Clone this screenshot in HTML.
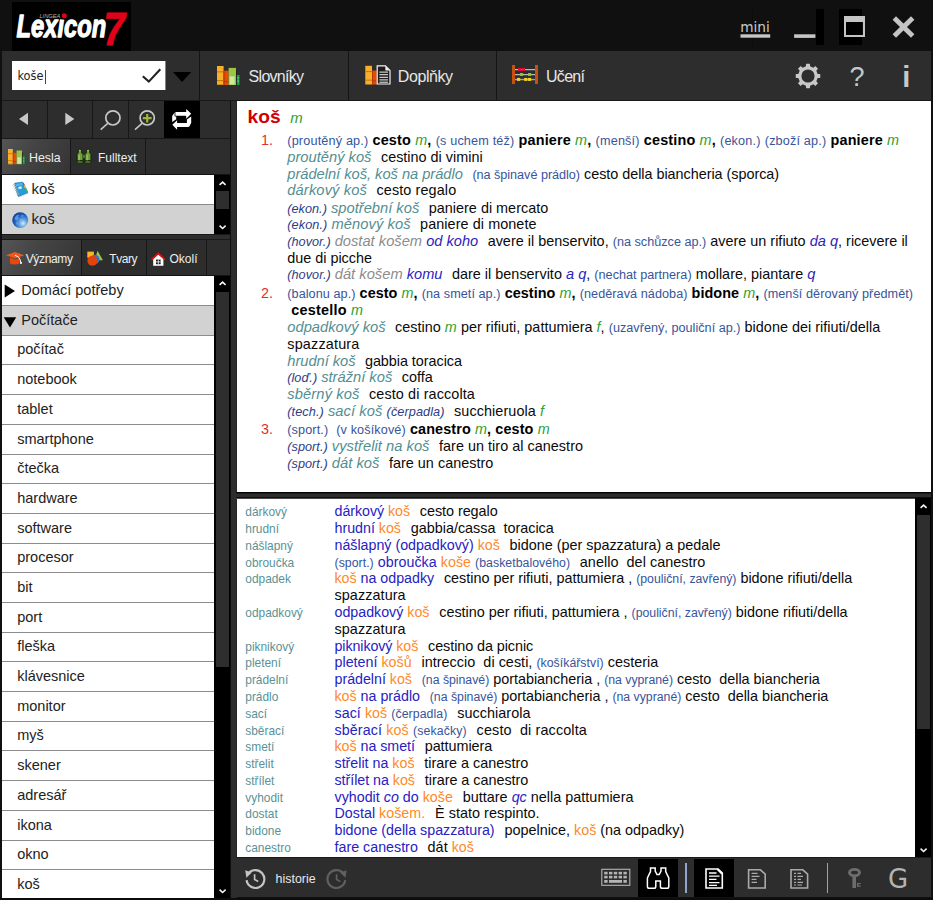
<!DOCTYPE html>
<html lang="cs"><head><meta charset="utf-8"><title>Lexicon 7</title>
<style>
*{box-sizing:border-box;margin:0;padding:0}
html,body{width:933px;height:900px;overflow:hidden}
body{background:#101010;position:relative;font-family:"Liberation Sans",sans-serif;font-size:14px;color:#000}
.a{position:absolute}
.pn{background:#2d2d2d}
svg{position:absolute;overflow:visible}
.mt{position:absolute;color:#e6e6e6;font-size:16px;line-height:20px;white-space:nowrap}
.tab{position:absolute;color:#eee;font-size:12px;line-height:16px;white-space:nowrap}
.li{position:absolute;left:2px;width:212px;white-space:nowrap;font-size:14.5px;color:#222}
.ln{position:absolute;white-space:nowrap;font-size:14.4px;line-height:17px;height:17px;color:#0a0a0a}
.b{font-weight:bold;color:#000}
.g{font-style:italic;color:#2f9f2f}
.p{font-size:12.65px;color:#37549c}
.pi{font-size:12.7px;font-style:italic;color:#303c86}
.t{font-style:italic;color:#538e92;font-size:14.7px}
.gr{font-style:italic;color:#8c8c8c;font-size:14.7px}
.bi{font-style:italic;color:#2d22c0;font-size:14.6px}
.n{color:#e0302c}
.k{font-size:11.9px;color:#5a9296}
.bl{color:#2722c2;font-size:14.25px}
.o{color:#ff8a2a;font-size:14.25px}
.sp{display:inline-block}
</style></head>
<body>
<div class="a" style="left:12px;top:2px;width:119px;height:49px;background:#000;"></div>
<svg style="left:12px;top:2px" width="119" height="49" viewBox="12 2 119 49">
<text x="16.6" y="36.6" font-family="Liberation Sans, sans-serif" font-weight="bold" font-style="italic" font-size="32" fill="#fff" stroke="#fff" stroke-width="1.3" stroke-linejoin="round" textLength="89.5" lengthAdjust="spacingAndGlyphs">Lexicon</text>
<text x="103.6" y="44.8" font-family="Liberation Sans, sans-serif" font-weight="bold" font-style="italic" font-size="47" fill="#e2001a" stroke="#e2001a" stroke-width="0.8" textLength="21.5" lengthAdjust="spacingAndGlyphs">7</text>
<ellipse cx="63.2" cy="16" rx="4.6" ry="3.4" fill="#000"/>
<circle cx="64.3" cy="15.8" r="2.5" fill="#e2001a"/>
<text x="39.4" y="17.8" font-family="Liberation Sans, sans-serif" font-style="italic" font-size="5.4" fill="#b0b0b0" textLength="21" lengthAdjust="spacingAndGlyphs">LINGEA</text>
</svg>
<div class="a" style="left:752px;top:9px;width:1px;height:36px;background:#0c0c0c;"></div>
<div class="a" style="left:816px;top:9px;width:8px;height:36px;background:#000;"></div>
<div class="a" style="left:839px;top:9px;width:23px;height:36px;background:#000;"></div>
<div class="a" style="left:740.2px;top:16.6px;font-family:'DejaVu Sans','Liberation Sans',sans-serif;font-size:13.7px;line-height:20px;color:#cacaca;white-space:nowrap">mini</div>
<svg style="left:738px;top:32px" width="80" height="8" viewBox="738 32 80 8"><rect x="740.5" y="34.3" width="29.7" height="3.4" fill="#c6c6c6"/><rect x="794.1" y="34.3" width="21.3" height="3.6" fill="#c6c6c6"/></svg>
<div class="a" style="left:844px;top:16px;width:21px;height:21px;border:2.5px solid #c4c4c4;border-top-width:6px"></div>
<svg style="left:892px;top:16px" width="23" height="22" viewBox="0 0 23 22"><path d="M2.3 2L20.7 20M20.7 2L2.3 20" stroke="#c4c4c4" stroke-width="4.9" fill="none"/></svg>
<div class="a" style="left:2px;top:51px;width:929px;height:49px;background:#2d2d2d;"></div>
<div class="a" style="left:2px;top:100px;width:929px;height:1px;background:#181818;"></div>
<div class="a" style="left:199px;top:51px;width:1px;height:49px;background:#161616;"></div>
<div class="a" style="left:348px;top:51px;width:1px;height:49px;background:#161616;"></div>
<div class="a" style="left:496px;top:51px;width:1px;height:49px;background:#161616;"></div>
<div class="a" style="left:12px;top:61px;width:153px;height:29px;background:#fff;"></div>
<div class="a" style="left:165px;top:61px;width:1px;height:29px;background:#858585;"></div>
<div class="a" style="left:17.4px;top:67.6px;font-family:'DejaVu Sans','Liberation Sans',sans-serif;font-size:11.4px;line-height:16px;color:#222;white-space:nowrap">koše</div>
<div class="a" style="left:44.5px;top:69.5px;width:1px;height:14px;background:#444;"></div>
<svg style="left:141px;top:67px" width="22" height="18" viewBox="141 67 22 18"><path d="M142.8 76.2L148.8 81.6L160.3 69.3" stroke="#222" stroke-width="2.1" fill="none"/></svg>
<svg style="left:172.9px;top:71.9px" width="19" height="11" viewBox="0 0 19 11"><path d="M0 0H18.2L9.1 10.1Z" fill="#000"/></svg>
<div class="mt" style="left:248.6px;top:67.3px;letter-spacing:-0.72px">Slovníky</div>
<div class="mt" style="left:397.8px;top:67.3px;letter-spacing:-0.42px">Doplňky</div>
<div class="mt" style="left:546px;top:67.3px;letter-spacing:-0.7px">Učení</div>
<svg style="left:217px;top:66px" width="23" height="19" viewBox="0 0 23 19">
<rect x="0" y="0" width="6.6" height="19" fill="#f9ae2c"/><rect x="0" y="5.3" width="6.6" height="1.1" fill="#c97a10"/><rect x="0" y="14" width="6.6" height="1.1" fill="#c97a10"/><rect x="0" y="18" width="6.6" height="1" fill="#d88a14"/>
<rect x="6.6" y="4.7" width="5" height="14.3" fill="#e24e08"/><rect x="6.6" y="15" width="5" height="1.1" fill="#b83800"/><rect x="6.6" y="4.7" width="1" height="14.3" fill="#b83800"/>
<rect x="11.6" y="1.9" width="7.4" height="17.1" fill="#9ac644"/><rect x="12.6" y="10.4" width="5" height="8" fill="#cfe8a0"/><rect x="19" y="4" width="0.9" height="15" fill="#1c1c1c"/>
<rect x="19.9" y="9" width="2.6" height="10" fill="#18a048"/><rect x="20.5" y="11.4" width="1.4" height="1" fill="#8fe0a5"/><rect x="20.5" y="14.6" width="1.4" height="1" fill="#8fe0a5"/>
</svg>
<svg style="left:365px;top:64.5px" width="26" height="20" viewBox="0 0 26 20">
<rect x="0.3" y="0.8" width="6.7" height="18.7" fill="#f9ae2c"/><rect x="0.3" y="6" width="6.7" height="1.1" fill="#c97a10"/><rect x="0.3" y="14.6" width="6.7" height="1.1" fill="#c97a10"/>
<rect x="7" y="5.6" width="4.8" height="13.9" fill="#e24e08"/><rect x="7" y="15.4" width="4.8" height="1.1" fill="#b83800"/><rect x="7" y="5.6" width="1" height="13.9" fill="#b83800"/>
<path d="M12.2 0.9H20.4L25 5.4V19H12.2Z" fill="#1e1e1e" stroke="#f2f2f2" stroke-width="1.2"/>
<path d="M20.4 0.9L25 5.4H20.4Z" fill="#f2f2f2"/>
<path d="M14.4 7.1H23M14.4 9.7H23M14.4 12.3H23M14.4 14.9H23M14.4 17.2H23" stroke="#f2f2f2" stroke-width="1"/>
</svg>
<svg style="left:511.5px;top:65px" width="26" height="19" viewBox="0 0 26 19">
<rect x="0" y="0" width="3" height="19" fill="#c8500e"/><rect x="23" y="0" width="3" height="19" fill="#c8500e"/>
<path d="M3 4.5H23M3 9.5H23M3 14.4H23" stroke="#d8d8d8" stroke-width="0.9"/><path d="M3 5.4H23M3 10.4H23M3 15.3H23" stroke="#555" stroke-width="0.9"/>
<rect x="6" y="3" width="3.2" height="3" fill="#e01030"/><rect x="9.8" y="3" width="3.2" height="3" fill="#e01030"/>
<rect x="8" y="8" width="3.2" height="3" fill="#8fbf3f"/><rect x="16" y="8" width="3.2" height="3" fill="#8fbf3f"/>
<rect x="5" y="12.9" width="3.2" height="3" fill="#f5d21a"/><rect x="12.2" y="12.9" width="3.2" height="3" fill="#f5d21a"/><rect x="16" y="12.9" width="3.2" height="3" fill="#f5d21a"/>
</svg>
<svg style="left:794.8px;top:63px" width="26" height="26" viewBox="-13 -13 26 26">
<path d="M-2.08 -9.68 L-1.94 -12.25 L1.94 -12.25 L2.08 -9.68 L5.37 -8.32 L7.29 -10.03 L10.03 -7.29 L8.32 -5.37 L9.68 -2.08 L12.25 -1.94 L12.25 1.94 L9.68 2.08 L8.32 5.37 L10.03 7.29 L7.29 10.03 L5.37 8.32 L2.08 9.68 L1.94 12.25 L-1.94 12.25 L-2.08 9.68 L-5.37 8.32 L-7.29 10.03 L-10.03 7.29 L-8.32 5.37 L-9.68 2.08 L-12.25 1.94 L-12.25 -1.94 L-9.68 -2.08 L-8.32 -5.37 L-10.03 -7.29 L-7.29 -10.03 L-5.37 -8.32Z M6.6 0A6.6 6.6 0 1 0 -6.6 0A6.6 6.6 0 1 0 6.6 0Z" fill="#c8c8c8" fill-rule="evenodd"/>
</svg>
<div class="a" style="left:849.5px;top:62px;font-size:27px;line-height:30px;color:#c8c8c8">?</div>
<div class="a" style="left:902.2px;top:62px;font-size:29px;line-height:30px;color:#c8c8c8;font-weight:bold">i</div>
<div class="a" style="left:2px;top:101px;width:229px;height:37px;background:#2d2d2d;"></div>
<div class="a" style="left:46.5px;top:101px;width:1.3px;height:37px;background:#171717;"></div>
<div class="a" style="left:92px;top:101px;width:1.3px;height:37px;background:#171717;"></div>
<div class="a" style="left:128px;top:101px;width:1.3px;height:37px;background:#171717;"></div>
<div class="a" style="left:164px;top:101px;width:36px;height:37px;background:#000;"></div>
<div class="a" style="left:2px;top:138px;width:229px;height:1px;background:#181818;"></div>
<svg style="left:2px;top:101px" width="198" height="37" viewBox="2 101 198 37"><path d="M28 112.8V125L19 118.9Z" fill="#c8c8c8"/><path d="M65.3 112.8V125L74.3 118.9Z" fill="#c8c8c8"/><circle cx="112.9" cy="117.9" r="7.1" fill="none" stroke="#c8c8c8" stroke-width="1.7"/><path d="M107.7 123.4L100.7 129.6" stroke="#c8c8c8" stroke-width="1.5"/><circle cx="147.2" cy="117.9" r="7.1" fill="none" stroke="#c8c8c8" stroke-width="1.7"/><path d="M142 123.4L135 129.6" stroke="#c8c8c8" stroke-width="1.5"/><path d="M142.8 118.2H151.6M147.2 113.9V122.6" stroke="#9ab53a" stroke-width="2.2"/><path d="M175.4 112H186.2V109.1L191.2 113.8L186.2 118.7V115.8H175.4Z" fill="#fff"/><path d="M174.6 112.4L172.2 116V122L176.2 119.2V116.6H174.6Z" fill="#fff"/><path d="M188.7 126.9H177.1V129.7L172.3 124.7L177.1 120.3V123.1H188.7Z" fill="#fff"/><path d="M191.2 116.4V122.7L189.4 126.4H186.9V119.6Z" fill="#fff"/></svg>
<div class="a" style="left:2px;top:139px;width:229px;height:36px;background:#2d2d2d;"></div>
<div class="a" style="left:2px;top:139px;width:68.5px;height:36px;background:;background:linear-gradient(120deg,#555,#444 40%,#383838 85%,#333)"></div>
<div class="a" style="left:70.3px;top:139px;width:1.2px;height:36px;background:#171717;"></div>
<div class="a" style="left:145.3px;top:139px;width:1.2px;height:36px;background:#171717;"></div>
<div class="a" style="left:2px;top:174px;width:229px;height:1px;background:#131313;"></div>
<svg style="left:8px;top:149.3px" width="17" height="15.2" preserveAspectRatio="none" viewBox="0 0 23 19">
<rect x="0" y="0" width="6.6" height="19" fill="#f9ae2c"/><rect x="0" y="5.3" width="6.6" height="1.1" fill="#c97a10"/><rect x="0" y="14" width="6.6" height="1.1" fill="#c97a10"/><rect x="0" y="18" width="6.6" height="1" fill="#d88a14"/>
<rect x="6.6" y="4.7" width="5" height="14.3" fill="#e24e08"/><rect x="6.6" y="15" width="5" height="1.1" fill="#b83800"/><rect x="6.6" y="4.7" width="1" height="14.3" fill="#b83800"/>
<rect x="11.6" y="1.9" width="7.4" height="17.1" fill="#9ac644"/><rect x="12.6" y="10.4" width="5" height="8" fill="#cfe8a0"/><rect x="19" y="4" width="0.9" height="15" fill="#1c1c1c"/>
<rect x="19.9" y="9" width="2.6" height="10" fill="#18a048"/><rect x="20.5" y="11.4" width="1.4" height="1" fill="#8fe0a5"/><rect x="20.5" y="14.6" width="1.4" height="1" fill="#8fe0a5"/>
</svg>
<div class="tab" style="left:29px;top:149.6px;font-size:12.4px">Hesla</div>
<svg style="left:76px;top:148px" width="16" height="16" viewBox="76 148 16 16">
<g stroke="#14200a" stroke-width="0.9" stroke-linejoin="round">
<rect x="82.2" y="154.2" width="3.6" height="4.6" fill="#7fb24a"/>
<path d="M78.5 152.2Q78 150.6 78.6 149.6Q79.9 148.8 81.2 149.6Q81.8 150.6 81.3 152.2L83 154.6V160.8H77.1V154.6Z" fill="#6f9f3c"/>
<path d="M86.7 152.2Q86.2 150.6 86.8 149.6Q88.1 148.8 89.4 149.6Q90 150.6 89.5 152.2L90.9 154.6V160.8H85V154.6Z" fill="#6f9f3c"/>
<rect x="77.1" y="160.9" width="5.9" height="2.3" rx="0.8" fill="#5f8f30"/>
<rect x="85" y="160.9" width="5.9" height="2.3" rx="0.8" fill="#5f8f30"/>
</g>
<rect x="78.4" y="154.8" width="1.5" height="5.6" fill="#9bcc68" opacity="0.8"/>
<rect x="86.4" y="154.8" width="1.5" height="5.6" fill="#9bcc68" opacity="0.8"/>
<circle cx="79.9" cy="150.7" r="0.9" fill="#93c45e"/><circle cx="88.1" cy="150.7" r="0.9" fill="#93c45e"/>
</svg>
<div class="tab" style="left:98px;top:149.6px;font-size:12px">Fulltext</div>
<div class="a" style="left:2px;top:175px;width:212px;height:29px;background:#fff;"></div>
<div class="a" style="left:2px;top:204px;width:212px;height:1px;background:#8a8a8a;"></div>
<div class="a" style="left:2px;top:205px;width:212px;height:28.5px;background:#d2d2d2;"></div>
<div class="a" style="left:214px;top:175px;width:16px;height:58.5px;background:#000;"></div>
<div class="a" style="left:216px;top:191px;width:13px;height:18px;background:#2e2e2e;"></div>
<svg style="left:218.5px;top:180.6px" width="7.2" height="4.6" viewBox="0 0 7.2 4.6"><path d="M0.6 3.9L3.6 1.1L6.6 3.9" stroke="#f4f4f4" stroke-width="1.6" fill="none"/></svg>
<svg style="left:218.5px;top:224.6px" width="7.2" height="4.6" viewBox="0 0 7.2 4.6"><path d="M0.6 0.7L3.6 3.5L6.6 0.7" stroke="#f4f4f4" stroke-width="1.6" fill="none"/></svg>
<div class="li" style="left:31.5px;top:179px;font-size:15px;line-height:20px;width:auto">koš</div>
<div class="li" style="left:31.5px;top:208.6px;font-size:15px;line-height:20px;width:auto">koš</div>
<svg style="left:12px;top:182px" width="16.5" height="15.5" viewBox="12 182 16.5 15.5">
<path d="M14.6 184.2Q14.2 183.4 15.2 183.1L22 182.2Q23 182.1 23.4 182.9L27.7 192Q28.1 192.9 27.2 193.3L19.3 196.5Q18.4 196.8 18 196Z" fill="#2a9bd6" stroke="#1a6fa6" stroke-width="0.6"/>
<path d="M18.6 196.9L27.6 193.3L27.8 194L19 197.4Z" fill="#dfe8ee"/>
<path d="M15.4 184L22 183L23 185L16.4 186.2Z" fill="#5fc0ee" opacity="0.7"/>
<rect x="18.4" y="186.6" width="3.4" height="2.3" fill="#d8eef9" transform="rotate(-14 20 187.8)"/>
<path d="M23.2 183.2L24.2 185.4" stroke="#e03a2a" stroke-width="1.1"/>
<path d="M24.3 185.6L25.5 188.2" stroke="#f0c030" stroke-width="1.1"/>
<path d="M25.7 188.6L26.9 191.2" stroke="#58b848" stroke-width="1.1"/>
<g stroke="#9fb4c0" stroke-width="0.9" fill="none">
<path d="M12.6 185.2Q13.6 184 15.4 184.6"/><path d="M13.4 187.1Q14.4 185.9 16.2 186.5"/><path d="M14.2 189Q15.2 187.8 17 188.4"/><path d="M15 190.9Q16 189.7 17.8 190.3"/><path d="M15.8 192.8Q16.8 191.6 18.6 192.2"/><path d="M16.6 194.7Q17.6 193.5 19.4 194.1"/>
</g>
</svg>
<svg style="left:11.8px;top:211.8px" width="16.4" height="16.4" viewBox="0 0 16.4 16.4">
<defs><radialGradient id="gl" cx="0.68" cy="0.7" r="0.75"><stop offset="0" stop-color="#d8ecfb"/><stop offset="0.3" stop-color="#6aa9e6"/><stop offset="0.7" stop-color="#1f5fbe"/><stop offset="1" stop-color="#123f94"/></radialGradient></defs>
<circle cx="8.2" cy="8.2" r="7.9" fill="url(#gl)"/>
<path d="M2.6 6.2Q3.6 3.2 6.6 2.4Q7.2 3.6 6 4.6Q7.2 5.8 6 7.2Q5 9 3.6 8.2Q2.6 7.4 2.6 6.2Z" fill="#5f9fe2" opacity="0.9"/>
<path d="M8.6 3.4Q10.6 2.2 12.2 3.6Q11.4 5.4 9.6 5.2Z" fill="#4f8fd8" opacity="0.8"/>
<path d="M8 7.4Q9.4 6.2 10.6 7.6Q10.2 9.4 8.8 9.8Z" fill="#7fb6ec" opacity="0.8"/>
<path d="M3.8 10.2Q5.4 9.8 6.2 11.4Q5.8 13.2 4.6 12.6Z" fill="#6aa8e6" opacity="0.7"/>
</svg>
<div class="a" style="left:2px;top:233.5px;width:229px;height:1.5px;background:#181818;"></div>
<div class="a" style="left:2px;top:235px;width:229px;height:4px;background:#2d2d2d;"></div>
<div class="a" style="left:2px;top:239px;width:229px;height:1.4px;background:#181818;"></div>
<div class="a" style="left:2px;top:240.4px;width:229px;height:35.6px;background:#2d2d2d;"></div>
<div class="a" style="left:2px;top:240.4px;width:79px;height:35.6px;background:;background:linear-gradient(120deg,#555,#444 40%,#383838 85%,#333)"></div>
<div class="a" style="left:81px;top:240.4px;width:1.2px;height:35.6px;background:#171717;"></div>
<div class="a" style="left:146px;top:240.4px;width:1.2px;height:35.6px;background:#171717;"></div>
<div class="a" style="left:206px;top:240.4px;width:1.2px;height:35.6px;background:#171717;"></div>
<div class="a" style="left:2px;top:275px;width:229px;height:1px;background:#131313;"></div>
<svg style="left:6px;top:252px" width="18.2" height="12.8" viewBox="0 0 18.2 12.8">
<path d="M0 3.2L9 0L18.2 3.2L9.4 6.6Z" fill="#f2581c"/>
<path d="M4 5.6V11.6Q8.6 13.6 13.6 11.6V5.8L9.4 7.6Z" fill="#e8480e"/>
<path d="M9 3.2Q13.5 4.5 14.2 8L15 11" stroke="#fff" stroke-width="1" fill="none"/>
<circle cx="15" cy="11" r="1" fill="#fff"/>
</svg>
<div class="tab" style="left:25.7px;top:251.2px;letter-spacing:-0.35px">Významy</div>
<svg style="left:86.8px;top:250.8px" width="16.2" height="15" viewBox="0 0 16.2 15">
<rect x="0.3" y="0.6" width="6.6" height="6.2" fill="#f5b62c"/>
<path d="M10.6 -0.2L15.9 9.2H7.4Z" fill="#9cc840"/>
<circle cx="8" cy="8.4" r="4.6" fill="#2f6fd8"/>
<circle cx="5.4" cy="9.8" r="5" fill="#e2440c"/>
</svg>
<div class="tab" style="left:109.3px;top:251.2px;letter-spacing:-0.45px">Tvary</div>
<svg style="left:150.6px;top:252.4px" width="15" height="14" viewBox="0 0 15 14">
<path d="M2.2 6.8L7.3 2.2L12.4 6.8V13.7H2.2Z" fill="#fff"/>
<path d="M0.6 7.6L7.3 1.4L14 7.6" stroke="#e01010" stroke-width="1.7" fill="none"/>
<rect x="5" y="7.6" width="4.6" height="4.6" fill="#181818"/>
<path d="M7.3 7.6V12.2M5 9.9H9.6" stroke="#fff" stroke-width="0.8"/>
</svg>
<div class="tab" style="left:169.5px;top:251.2px">Okolí</div>
<div class="a" style="left:2px;top:276px;width:212px;height:622px;background:#fff;"></div>
<div class="a" style="left:214px;top:276px;width:16px;height:622px;background:#000;"></div>
<div class="a" style="left:216px;top:292px;width:13px;height:375px;background:#2e2e2e;"></div>
<svg style="left:218.5px;top:280.9px" width="7.2" height="4.6" viewBox="0 0 7.2 4.6"><path d="M0.6 3.9L3.6 1.1L6.6 3.9" stroke="#f4f4f4" stroke-width="1.6" fill="none"/></svg>
<svg style="left:218.5px;top:888.8px" width="7.2" height="4.6" viewBox="0 0 7.2 4.6"><path d="M0.6 0.7L3.6 3.5L6.6 0.7" stroke="#f4f4f4" stroke-width="1.6" fill="none"/></svg>
<div class="a" style="left:2px;top:306px;width:212px;height:29px;background:#d2d2d2;"></div>
<div class="a" style="left:2px;top:305px;width:212px;height:1px;background:#8c8c8c;"></div>
<div class="li" style="left:21.3px;top:281.6px;line-height:17px;width:auto">Domácí potřeby</div>
<div class="a" style="left:2px;top:335px;width:212px;height:1px;background:#8c8c8c;"></div>
<div class="li" style="left:21.3px;top:311.6px;line-height:17px;width:auto">Počítače</div>
<div class="a" style="left:2px;top:364px;width:212px;height:1px;background:#8c8c8c;"></div>
<div class="li" style="left:17.2px;top:340.6px;line-height:17px;width:auto">počítač</div>
<div class="a" style="left:2px;top:394px;width:212px;height:1px;background:#8c8c8c;"></div>
<div class="li" style="left:17.2px;top:370.6px;line-height:17px;width:auto">notebook</div>
<div class="a" style="left:2px;top:424px;width:212px;height:1px;background:#8c8c8c;"></div>
<div class="li" style="left:17.2px;top:400.6px;line-height:17px;width:auto">tablet</div>
<div class="a" style="left:2px;top:454px;width:212px;height:1px;background:#8c8c8c;"></div>
<div class="li" style="left:17.2px;top:430.6px;line-height:17px;width:auto">smartphone</div>
<div class="a" style="left:2px;top:483px;width:212px;height:1px;background:#8c8c8c;"></div>
<div class="li" style="left:17.2px;top:459.6px;line-height:17px;width:auto">čtečka</div>
<div class="a" style="left:2px;top:513px;width:212px;height:1px;background:#8c8c8c;"></div>
<div class="li" style="left:17.2px;top:489.6px;line-height:17px;width:auto">hardware</div>
<div class="a" style="left:2px;top:543px;width:212px;height:1px;background:#8c8c8c;"></div>
<div class="li" style="left:17.2px;top:519.6px;line-height:17px;width:auto">software</div>
<div class="a" style="left:2px;top:572px;width:212px;height:1px;background:#8c8c8c;"></div>
<div class="li" style="left:17.2px;top:548.6px;line-height:17px;width:auto">procesor</div>
<div class="a" style="left:2px;top:602px;width:212px;height:1px;background:#8c8c8c;"></div>
<div class="li" style="left:17.2px;top:578.6px;line-height:17px;width:auto">bit</div>
<div class="a" style="left:2px;top:632px;width:212px;height:1px;background:#8c8c8c;"></div>
<div class="li" style="left:17.2px;top:608.6px;line-height:17px;width:auto">port</div>
<div class="a" style="left:2px;top:661px;width:212px;height:1px;background:#8c8c8c;"></div>
<div class="li" style="left:17.2px;top:637.6px;line-height:17px;width:auto">fleška</div>
<div class="a" style="left:2px;top:691px;width:212px;height:1px;background:#8c8c8c;"></div>
<div class="li" style="left:17.2px;top:667.6px;line-height:17px;width:auto">klávesnice</div>
<div class="a" style="left:2px;top:721px;width:212px;height:1px;background:#8c8c8c;"></div>
<div class="li" style="left:17.2px;top:697.6px;line-height:17px;width:auto">monitor</div>
<div class="a" style="left:2px;top:750px;width:212px;height:1px;background:#8c8c8c;"></div>
<div class="li" style="left:17.2px;top:726.6px;line-height:17px;width:auto">myš</div>
<div class="a" style="left:2px;top:780px;width:212px;height:1px;background:#8c8c8c;"></div>
<div class="li" style="left:17.2px;top:756.6px;line-height:17px;width:auto">skener</div>
<div class="a" style="left:2px;top:810px;width:212px;height:1px;background:#8c8c8c;"></div>
<div class="li" style="left:17.2px;top:786.6px;line-height:17px;width:auto">adresář</div>
<div class="a" style="left:2px;top:840px;width:212px;height:1px;background:#8c8c8c;"></div>
<div class="li" style="left:17.2px;top:816.6px;line-height:17px;width:auto">ikona</div>
<div class="a" style="left:2px;top:869px;width:212px;height:1px;background:#8c8c8c;"></div>
<div class="li" style="left:17.2px;top:845.6px;line-height:17px;width:auto">okno</div>
<div class="li" style="left:17.2px;top:875.6px;line-height:17px;width:auto">koš</div>
<svg style="left:2px;top:276px" width="20" height="60" viewBox="2 276 20 60"><path d="M4.7 284.6V297.6L15 291.1Z" fill="#000"/><path d="M3.7 317.2H16.2L10 327.6Z" fill="#000"/></svg>
<div class="a" style="left:236px;top:101px;width:695px;height:391px;background:#fff;"></div>
<div class="a" style="left:231px;top:101px;width:5px;height:797px;background:#2d2d2d;"></div>
<div class="a" style="left:230px;top:101px;width:1px;height:797px;background:#0e0e0e;"></div>
<div class="a" style="left:236px;top:101px;width:1px;height:797px;background:#262626;"></div>
<div class="ln" style="left:247.6px;top:105.6px;font-size:19.2px;line-height:22px;height:22px;font-weight:bold;color:#d40000">koš<span style="font-weight:normal;font-style:italic;color:#2f9f2f;font-size:15px;margin-left:9.6px">m</span></div>
<div class="ln n" style="left:261px;top:132.4px">1.</div>
<div class="ln n" style="left:261px;top:284.7px">2.</div>
<div class="ln n" style="left:261px;top:421.0px">3.</div>
<div class="ln" id="T0" style="left:287.3px;top:132.4px;letter-spacing:0.168px"><span class="p">(proutěný ap.)</span> <span class="b">cesto</span> <span class="g">m</span><span class="b">,</span> <span class="p">(s uchem též)</span> <span class="b">paniere</span> <span class="g">m</span><span class="b">,</span> <span class="p">(menší)</span> <span class="b">cestino</span> <span class="g">m</span><span class="b">,</span> <span class="p">(ekon.)</span> <span class="p">(zboží ap.)</span> <span class="b">paniere</span> <span class="g">m</span></div>
<div class="ln" id="T1" style="left:287.3px;top:149.2px;letter-spacing:0.004px"><span class="t">proutěný koš</span><span class="sp" style="width:9.5px"></span>cestino di vimini</div>
<div class="ln" id="T2" style="left:287.3px;top:165.8px;letter-spacing:-0.029px"><span class="t">prádelní koš, koš na prádlo</span><span class="sp" style="width:9.5px"></span><span class="p">(na špinavé prádlo)</span> cesto della biancheria (sporca)</div>
<div class="ln" id="T3" style="left:287.3px;top:182.3px;letter-spacing:0.118px"><span class="t">dárkový koš</span><span class="sp" style="width:9.5px"></span>cesto regalo</div>
<div class="ln" id="T4" style="left:287.3px;top:199.5px;letter-spacing:0.014px"><span class="pi">(ekon.)</span> <span class="t">spotřební koš</span><span class="sp" style="width:9.5px"></span>paniere di mercato</div>
<div class="ln" id="T5" style="left:287.3px;top:216.3px;letter-spacing:0.078px"><span class="pi">(ekon.)</span> <span class="t">měnový koš</span><span class="sp" style="width:9.5px"></span>paniere di monete</div>
<div class="ln" id="T6" style="left:287.3px;top:233.0px;letter-spacing:0.010px"><span class="pi">(hovor.)</span> <span class="gr">dostat košem</span> <span class="bi">od koho</span><span class="sp" style="width:9.5px"></span>avere il benservito, <span class="p">(na schůzce ap.)</span> avere un rifiuto <span class="bi">da q</span>, ricevere il</div>
<div class="ln" id="T7" style="left:287.3px;top:249.6px;letter-spacing:-0.016px">due di picche</div>
<div class="ln" id="T8" style="left:287.3px;top:266.2px;letter-spacing:0.019px"><span class="pi">(hovor.)</span> <span class="gr">dát košem</span> <span class="bi">komu</span><span class="sp" style="width:9.5px"></span>dare il benservito <span class="bi">a q</span>, <span class="p">(nechat partnera)</span> mollare, piantare <span class="bi">q</span></div>
<div class="ln" id="T9" style="left:287.3px;top:284.7px;letter-spacing:0.061px"><span class="p">(balonu ap.)</span> <span class="b">cesto</span> <span class="g">m</span><span class="b">,</span> <span class="p">(na smetí ap.)</span> <span class="b">cestino</span> <span class="g">m</span><span class="b">,</span> <span class="p">(neděravá nádoba)</span> <span class="b">bidone</span> <span class="g">m</span><span class="b">,</span> <span class="p">(menší děrovaný předmět)</span></div>
<div class="ln" id="T10" style="left:291.3px;top:301.9px;letter-spacing:0.241px"><span class="b">cestello</span> <span class="g">m</span></div>
<div class="ln" id="T11" style="left:287.3px;top:319.1px;letter-spacing:0.022px"><span class="t">odpadkový koš</span><span class="sp" style="width:9.5px"></span>cestino <span class="g">m</span> per rifiuti, pattumiera <span class="g">f</span>, <span class="p">(uzavřený, pouliční ap.)</span> bidone dei rifiuti/della</div>
<div class="ln" id="T12" style="left:287.3px;top:336.0px;letter-spacing:0.180px">spazzatura</div>
<div class="ln" id="T13" style="left:287.3px;top:352.5px;letter-spacing:-0.044px"><span class="t">hrudní koš</span><span class="sp" style="width:9.5px"></span>gabbia toracica</div>
<div class="ln" id="T14" style="left:287.3px;top:369.2px;letter-spacing:0.007px"><span class="pi">(loď.)</span> <span class="t">strážní koš</span><span class="sp" style="width:9.5px"></span>coffa</div>
<div class="ln" id="T15" style="left:287.3px;top:386.3px;letter-spacing:0.118px"><span class="t">sběrný koš</span><span class="sp" style="width:9.5px"></span>cesto di raccolta</div>
<div class="ln" id="T16" style="left:287.3px;top:403.4px;letter-spacing:0.084px"><span class="pi">(tech.)</span> <span class="t">sací koš</span> <span class="pi">(čerpadla)</span><span class="sp" style="width:9.5px"></span>succhieruola <span class="g">f</span></div>
<div class="ln" id="T17" style="left:287.3px;top:421.0px;letter-spacing:0.116px"><span class="p">(sport.)</span><span class="sp" style="width:8px"></span><span class="p">(v košíkové)</span> <span class="b">canestro</span> <span class="g">m</span><span class="b">,</span> <span class="b">cesto</span> <span class="g">m</span></div>
<div class="ln" id="T18" style="left:287.3px;top:438.0px;letter-spacing:0.034px"><span class="pi">(sport.)</span> <span class="t">vystřelit na koš</span><span class="sp" style="width:9.5px"></span>fare un tiro al canestro</div>
<div class="ln" id="T19" style="left:287.3px;top:454.6px;letter-spacing:0.033px"><span class="pi">(sport.)</span> <span class="t">dát koš</span><span class="sp" style="width:9.5px"></span>fare un canestro</div>
<div class="a" style="left:236px;top:492px;width:695px;height:1px;background:#050505;"></div>
<div class="a" style="left:236px;top:493px;width:695px;height:1px;background:#1b1b1b;"></div>
<div class="a" style="left:236px;top:494px;width:695px;height:3px;background:#2d2d2d;"></div>
<div class="a" style="left:236px;top:497px;width:695px;height:1px;background:#0e0e0e;"></div>
<div class="a" style="left:236px;top:498px;width:695px;height:1px;background:#4d4d4d;"></div>
<div class="a" style="left:237px;top:499px;width:678px;height:358px;background:#fff;"></div>
<div class="a" style="left:915px;top:498px;width:16px;height:359px;background:#000;"></div>
<div class="a" style="left:917px;top:515px;width:13px;height:214px;background:#2e2e2e;"></div>
<svg style="left:919.6px;top:503.7px" width="7.2" height="4.6" viewBox="0 0 7.2 4.6"><path d="M0.6 3.9L3.6 1.1L6.6 3.9" stroke="#f4f4f4" stroke-width="1.6" fill="none"/></svg>
<svg style="left:919.6px;top:848px" width="7.2" height="4.6" viewBox="0 0 7.2 4.6"><path d="M0.6 0.7L3.6 3.5L6.6 0.7" stroke="#f4f4f4" stroke-width="1.6" fill="none"/></svg>
<div class="ln" style="left:245.3px;top:503.2px"><span class="k">dárkový</span></div>
<div class="ln" id="B0" style="left:334.5px;top:503.2px;letter-spacing:-0.050px"><span class="bl">dárkový </span><span class="o">koš</span><span class="sp" style="width:9.8px"></span>cesto regalo</div>
<div class="ln" style="left:245.3px;top:520.0px"><span class="k">hrudní</span></div>
<div class="ln" id="B1" style="left:334.5px;top:520.0px;letter-spacing:-0.008px"><span class="bl">hrudní </span><span class="o">koš</span><span class="sp" style="width:9.8px"></span>gabbia/cassa&nbsp; toracica</div>
<div class="ln" style="left:245.3px;top:536.8px"><span class="k">nášlapný</span></div>
<div class="ln" id="B2" style="left:334.5px;top:536.8px;letter-spacing:-0.012px"><span class="bl">nášlapný (odpadkový) </span><span class="o">koš</span><span class="sp" style="width:9.8px"></span>bidone (per spazzatura) a pedale</div>
<div class="ln" style="left:245.3px;top:553.6px"><span class="k">obroučka</span></div>
<div class="ln" id="B3" style="left:334.5px;top:553.6px;letter-spacing:0.039px"><span class="p" style="font-size:12.3px">(sport.)</span> <span class="bl">obroučka </span><span class="o">koše</span> <span class="p" style="font-size:12.3px">(basketbalového)</span><span class="sp" style="width:9.8px"></span>anello&nbsp; del canestro</div>
<div class="ln" style="left:245.3px;top:570.4px"><span class="k">odpadek</span></div>
<div class="ln" id="B4" style="left:334.5px;top:570.4px;letter-spacing:-0.014px"><span class="o">koš</span><span class="bl"> na odpadky</span><span class="sp" style="width:9.8px"></span>cestino per rifiuti, pattumiera , <span class="p" style="font-size:12.3px">(pouliční, zavřený)</span> bidone rifiuti/della</div>
<div class="ln" id="B5" style="left:334.5px;top:587.2px;letter-spacing:0.079px">spazzatura</div>
<div class="ln" style="left:245.3px;top:603.9px"><span class="k">odpadkový</span></div>
<div class="ln" id="B6" style="left:334.5px;top:603.9px;letter-spacing:-0.012px"><span class="bl">odpadkový </span><span class="o">koš</span><span class="sp" style="width:9.8px"></span>cestino per rifiuti, pattumiera , <span class="p" style="font-size:12.3px">(pouliční, zavřený)</span> bidone rifiuti/della</div>
<div class="ln" id="B7" style="left:334.5px;top:620.7px;letter-spacing:0.079px">spazzatura</div>
<div class="ln" style="left:245.3px;top:637.5px"><span class="k">piknikový</span></div>
<div class="ln" id="B8" style="left:334.5px;top:637.5px;letter-spacing:-0.076px"><span class="bl">piknikový </span><span class="o">koš</span><span class="sp" style="width:9.8px"></span>cestino da picnic</div>
<div class="ln" style="left:245.3px;top:654.3px"><span class="k">pletení</span></div>
<div class="ln" id="B9" style="left:334.5px;top:654.3px;letter-spacing:0.027px"><span class="bl">pletení </span><span class="o">košů</span><span class="sp" style="width:9.8px"></span>intreccio&nbsp; di cesti, <span class="p" style="font-size:12.3px">(košíkářství)</span> cesteria</div>
<div class="ln" style="left:245.3px;top:671.1px"><span class="k">prádelní</span></div>
<div class="ln" id="B10" style="left:334.5px;top:671.1px;letter-spacing:-0.016px"><span class="bl">prádelní </span><span class="o">koš</span><span class="sp" style="width:9.8px"></span><span class="p" style="font-size:12.3px">(na špinavé)</span> portabiancheria , <span class="p" style="font-size:12.3px">(na vyprané)</span> cesto&nbsp; della biancheria</div>
<div class="ln" style="left:245.3px;top:687.9px"><span class="k">prádlo</span></div>
<div class="ln" id="B11" style="left:334.5px;top:687.9px;letter-spacing:-0.008px"><span class="o">koš</span><span class="bl"> na prádlo</span><span class="sp" style="width:9.8px"></span><span class="p" style="font-size:12.3px">(na špinavé)</span> portabiancheria , <span class="p" style="font-size:12.3px">(na vyprané)</span> cesto&nbsp; della biancheria</div>
<div class="ln" style="left:245.3px;top:704.7px"><span class="k">sací</span></div>
<div class="ln" id="B12" style="left:334.5px;top:704.7px;letter-spacing:0.062px"><span class="bl">sací </span><span class="o">koš</span> <span class="p" style="font-size:12.3px">(čerpadla)</span><span class="sp" style="width:9.8px"></span>succhiarola</div>
<div class="ln" style="left:245.3px;top:721.5px"><span class="k">sběrací</span></div>
<div class="ln" id="B13" style="left:334.5px;top:721.5px;letter-spacing:0.133px"><span class="bl">sběrací </span><span class="o">koš</span> <span class="p" style="font-size:12.3px">(sekačky)</span><span class="sp" style="width:9.8px"></span>cesto&nbsp; di raccolta</div>
<div class="ln" style="left:245.3px;top:738.3px"><span class="k">smetí</span></div>
<div class="ln" id="B14" style="left:334.5px;top:738.3px;letter-spacing:-0.036px"><span class="o">koš</span><span class="bl"> na smetí</span><span class="sp" style="width:9.8px"></span>pattumiera</div>
<div class="ln" style="left:245.3px;top:755.1px"><span class="k">střelit</span></div>
<div class="ln" id="B15" style="left:334.5px;top:755.1px;letter-spacing:0.000px"><span class="bl">střelit na </span><span class="o">koš</span><span class="sp" style="width:9.8px"></span>tirare a canestro</div>
<div class="ln" style="left:245.3px;top:771.8px"><span class="k">střílet</span></div>
<div class="ln" id="B16" style="left:334.5px;top:771.8px;letter-spacing:-0.025px"><span class="bl">střílet na </span><span class="o">koš</span><span class="sp" style="width:9.8px"></span>tirare a canestro</div>
<div class="ln" style="left:245.3px;top:788.6px"><span class="k">vyhodit</span></div>
<div class="ln" id="B17" style="left:334.5px;top:788.6px;letter-spacing:0.019px"><span class="bl">vyhodit <i>co</i> do </span><span class="o">koše</span><span class="sp" style="width:9.8px"></span>buttare <i class="bl">qc</i> nella pattumiera</div>
<div class="ln" style="left:245.3px;top:805.4px"><span class="k">dostat</span></div>
<div class="ln" id="B18" style="left:334.5px;top:805.4px;letter-spacing:0.034px"><span class="bl">Dostal </span><span class="o">košem.</span><span class="sp" style="width:9.8px"></span>È stato respinto.</div>
<div class="ln" style="left:245.3px;top:822.2px"><span class="k">bidone</span></div>
<div class="ln" id="B19" style="left:334.5px;top:822.2px;letter-spacing:0.004px"><span class="bl">bidone (della spazzatura)</span><span class="sp" style="width:9.8px"></span>popelnice, <span class="o">koš</span> (na odpadky)</div>
<div class="ln" style="left:245.3px;top:839.0px"><span class="k">canestro</span></div>
<div class="ln" id="B20" style="left:334.5px;top:839.0px;letter-spacing:0.011px"><span class="bl">fare canestro</span><span class="sp" style="width:9.8px"></span>dát <span class="o">koš</span></div>
<div class="a" style="left:231px;top:857px;width:700px;height:40.4px;background:#2d2d2d;"></div>
<div class="a" style="left:236px;top:857px;width:695px;height:1.2px;background:#1a1a1a;"></div>
<div class="a" style="left:638px;top:859px;width:39.5px;height:38.4px;background:#000;"></div>
<div class="a" style="left:694.2px;top:859px;width:39.8px;height:38.4px;background:#000;"></div>
<div class="a" style="left:685.2px;top:863px;width:1.8px;height:30px;background:#93a4cc;"></div>
<div class="a" style="left:826.5px;top:863px;width:1.8px;height:30px;background:#93a4cc;"></div>
<div class="a" style="left:275.6px;top:871px;font-size:12.4px;line-height:16px;color:#e8e8e8;white-space:nowrap">historie</div>
<div class="a" style="left:888px;top:864px;font-family:&quot;DejaVu Sans&quot;,&quot;Liberation Sans&quot;,sans-serif;font-size:26px;line-height:30px;color:#b4b4b4">G</div>
<svg style="left:231px;top:859px" width="700" height="38" viewBox="231 859 700 38">
<path d="M247.9 874.3A8.9 8.9 0 1 1 246.6 880.2" fill="none" stroke="#c4c4c4" stroke-width="2.2"/>
<path d="M245.2 870.2L251.8 872.4L246.4 877.8Z" fill="#c4c4c4"/>
<path d="M254.6 874.2V879.4L258.2 881.4" stroke="#c4c4c4" stroke-width="1.7" fill="none"/>
<path d="M343.9 874.3A8.9 8.9 0 1 0 345.2 880.2" fill="none" stroke="#606060" stroke-width="2.2"/>
<path d="M346.6 870.2L340 872.4L345.4 877.8Z" fill="#606060"/>
<path d="M336.6 874.2V879.4L340.2 881.4" stroke="#606060" stroke-width="1.7" fill="none"/>
<!-- keyboard -->
<rect x="601.8" y="869.3" width="28" height="16" fill="none" stroke="#b4b4b4" stroke-width="1.1"/>
<g fill="#b4b4b4">
<rect x="604.2" y="871.8" width="3.4" height="2.6"/><rect x="609" y="871.8" width="3.4" height="2.6"/><rect x="613.8" y="871.8" width="3.4" height="2.6"/><rect x="618.6" y="871.8" width="3.4" height="2.6"/><rect x="623.4" y="871.8" width="3.4" height="2.6"/>
<rect x="604.2" y="875.8" width="3.4" height="2.6"/><rect x="609" y="875.8" width="3.4" height="2.6"/><rect x="613.8" y="875.8" width="3.4" height="2.6"/><rect x="618.6" y="875.8" width="3.4" height="2.6"/><rect x="623.4" y="875.8" width="3.4" height="2.6"/>
<rect x="604.2" y="880" width="3.4" height="2.8"/><rect x="609" y="880" width="13" height="2.8"/><rect x="623.4" y="880" width="3.4" height="2.8"/>
</g>
<!-- binoculars white outline -->
<path d="M650.5 868H655.2V871L657 874.5H659.2L661 871V868H665.7V871.5L668.8 878V886.5Q668.8 888.3 667 888.3H662.2Q660.4 888.3 660.4 886.5V881H655.8V886.5Q655.8 888.3 654 888.3H649.2Q647.4 888.3 647.4 886.5V878L650.5 871.5Z" fill="none" stroke="#fff" stroke-width="1.5"/>
<!-- doc1 white -->
<path d="M706 869H717.5L722.3 873.6V888H706Z" fill="none" stroke="#fff" stroke-width="1.6"/>
<path d="M717.5 869L722.3 873.6" stroke="#fff" stroke-width="2.4"/>
<path d="M709 873H716.5M709 876.2H719.5M709 879.4H716.5M709 882.6H719.5M709 885.4H717" stroke="#fff" stroke-width="1.3"/>
<!-- doc2 -->
<path d="M748.6 869.8H760.4L765.2 874.2V888H748.6Z" fill="none" stroke="#aaa" stroke-width="1.6"/>
<path d="M751.6 873.4H757.5M751.6 876.4H759.5M751.6 879.4H756.5M751.6 882.4H757" stroke="#aaa" stroke-width="1.1"/>
<!-- doc3 -->
<path d="M791 869.8H802.8L807.6 874.2V888H791Z" fill="none" stroke="#aaa" stroke-width="1.6"/>
<path d="M794 873.4H796M797.5 873.4H801M794 876.4H796M797.5 876.4H803M794 879.4H796M797.5 879.4H801M794 882.4H796M797.5 882.4H803M794 885H796M797.5 885H802" stroke="#aaa" stroke-width="1.1"/>
<!-- key -->
<ellipse cx="854.5" cy="872.6" rx="5" ry="3.2" fill="none" stroke="#6c6c6c" stroke-width="2.9"/>
<path d="M854.2 876V888" stroke="#6c6c6c" stroke-width="3.6"/>
<path d="M860.6 883.6H857.6V886.2H860.6" stroke="#6c6c6c" stroke-width="1.3" fill="none"/>
</svg>
<div class="a" style="left:0;top:897.5px;width:933px;height:2.5px;background:#0c0c0c"></div>
</body></html>
